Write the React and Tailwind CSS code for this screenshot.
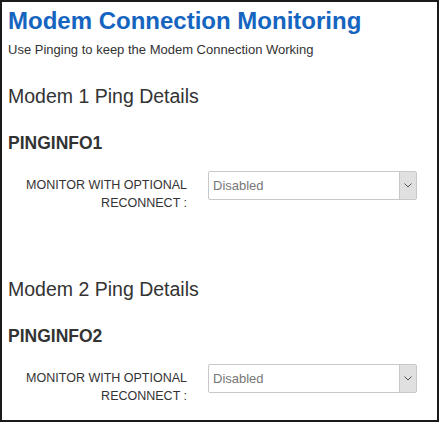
import React from "react";

function Select() {
  return (
    <div className="flex h-[29px] w-[209px] items-stretch rounded-[2px] border border-[#c8c8c8] bg-white">
      <div className="flex flex-1 items-center pl-[4px] text-[13px] text-[#777]">Disabled</div>
      <div className="flex w-[17px] items-center justify-center border-l border-[#c8c8c8] bg-[#e0e0e0]">
        <svg width="8" height="5" viewBox="0 0 8 5" fill="none">
          <path d="M0.5 0.5 L4 4 L7.5 0.5" stroke="#555" strokeWidth="1" />
        </svg>
      </div>
    </div>
  );
}

function Section({ title, info }) {
  return (
    <div>
      <h2 className="text-[19.5px] leading-[24px] text-[#333]">{title}</h2>
      <h3 className="mt-[25px] text-[17.5px] font-bold leading-[20px] text-[#333]">{info}</h3>
      <div className="mt-[18px] flex items-start">
        <div className="w-[179px] pt-[5px] text-right text-[12.5px] leading-[18px] text-[#333]">
          MONITOR WITH OPTIONAL
          <br />
          RECONNECT :
        </div>
        <div className="ml-[21px]">
          <Select />
        </div>
      </div>
    </div>
  );
}

export default function App() {
  return (
    <div
      className="h-[422px] w-[439px] border-2 border-[#1a1a1a] bg-white px-[6px]"
      style={{ fontFamily: '"Liberation Sans", Arial, sans-serif' }}
    >
      <h1 className="pt-[5px] text-[24px] font-bold leading-[28px] text-[#1565c0]">
        Modem Connection Monitoring
      </h1>
      <p className="mt-[7px] text-[13px] leading-[15px] text-[#333]">
        Use Pinging to keep the Modem Connection Working
      </p>
      <div className="mt-[27px]">
        <Section title="Modem 1 Ping Details" info="PINGINFO1" />
      </div>
      <div className="mt-[65px]">
        <Section title="Modem 2 Ping Details" info="PINGINFO2" />
      </div>
    </div>
  );
}
